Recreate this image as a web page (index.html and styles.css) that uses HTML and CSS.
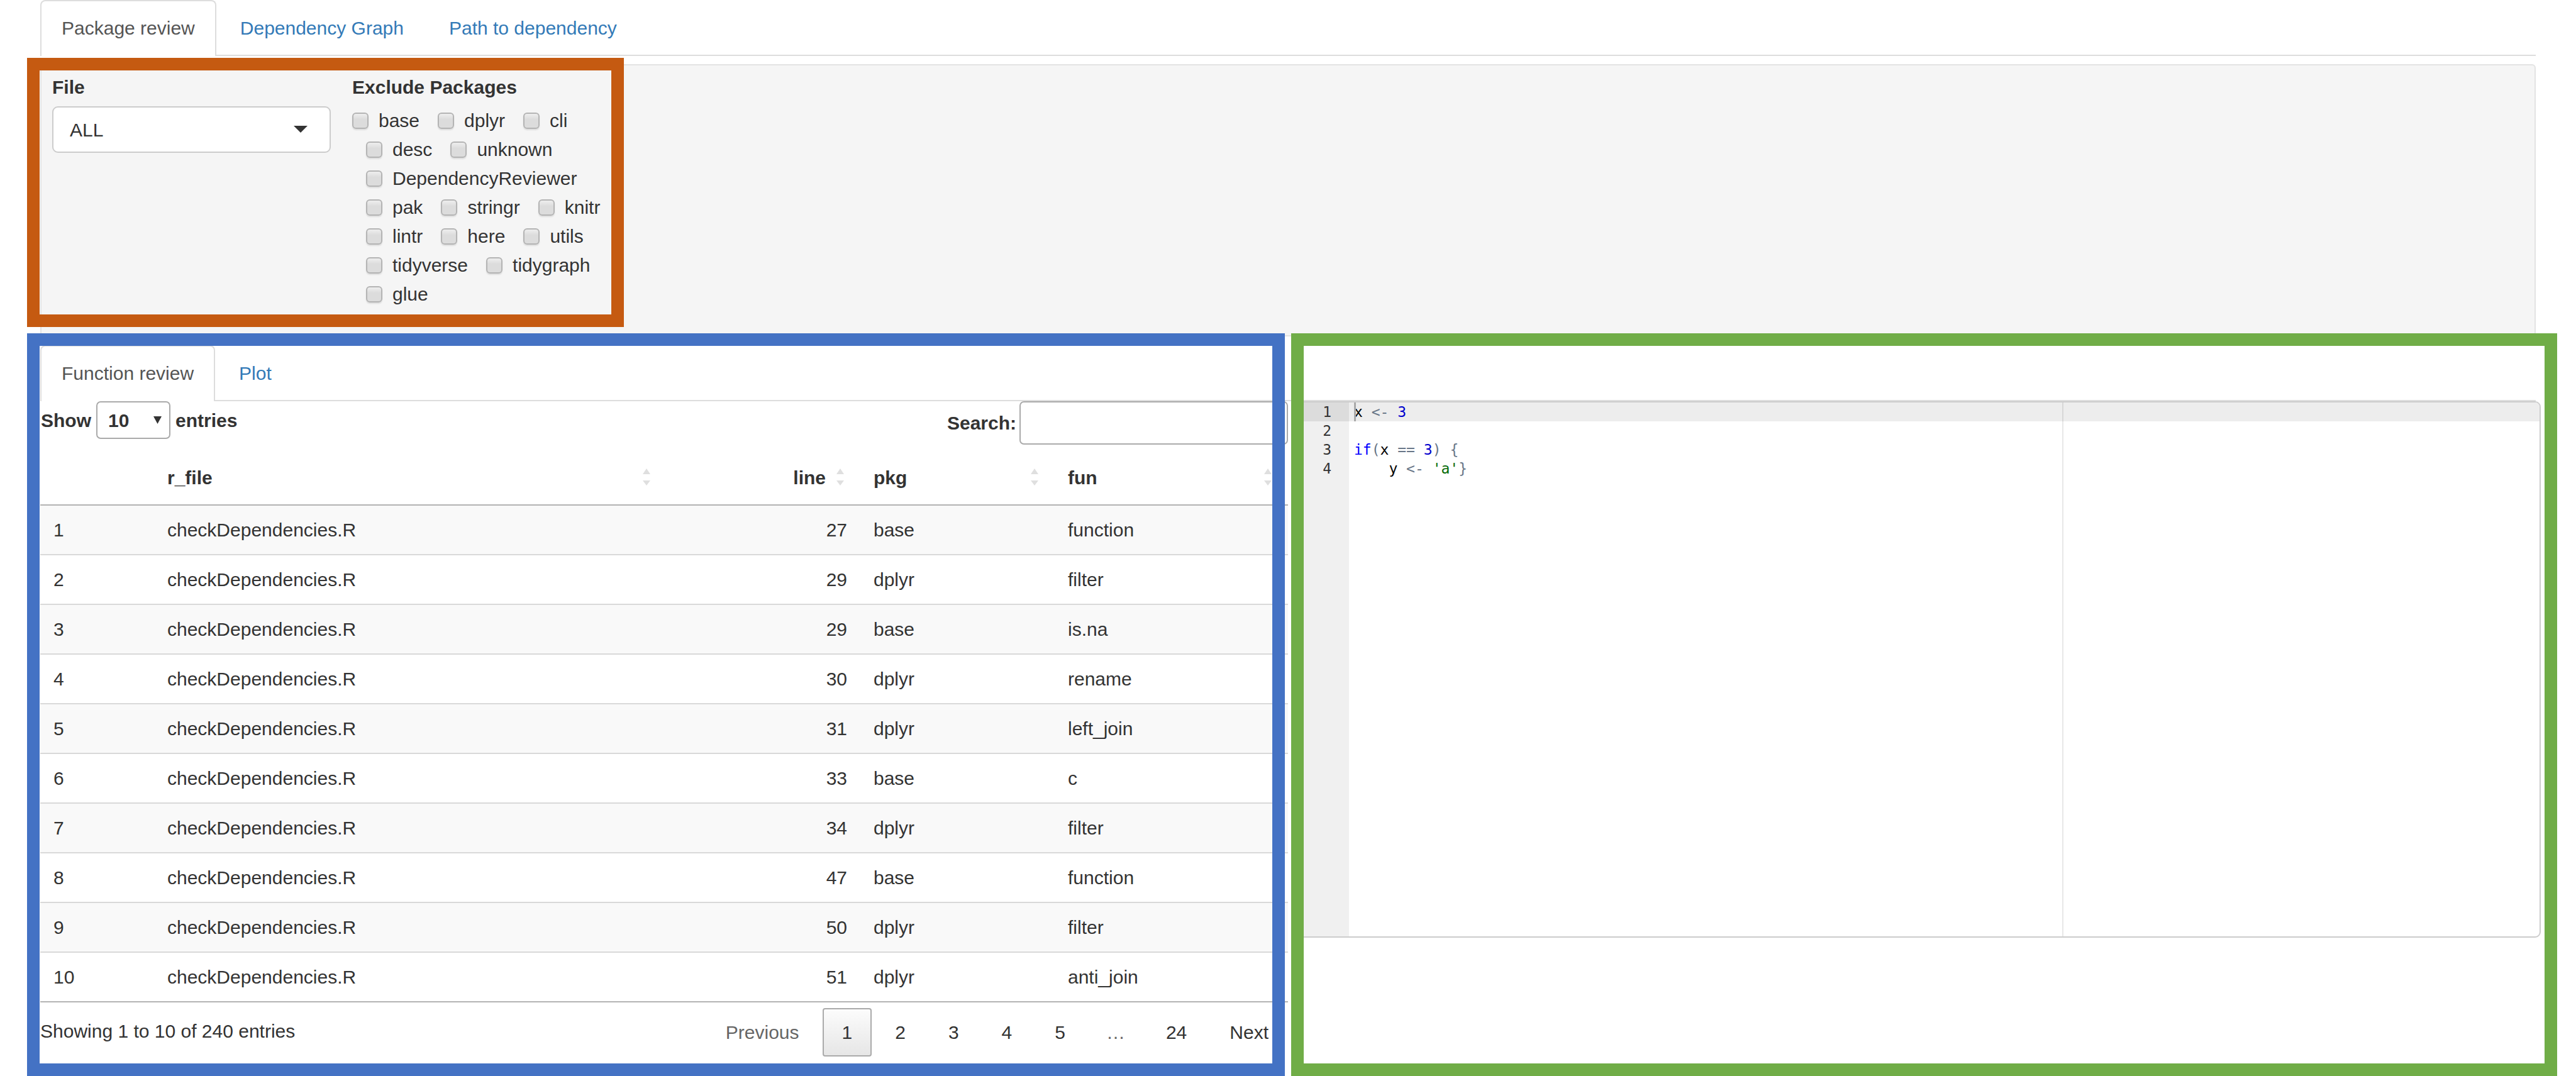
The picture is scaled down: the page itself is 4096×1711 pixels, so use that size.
FILE: index.html
```html
<!DOCTYPE html>
<html lang="en">
<head>
  <meta charset="utf-8">
  <title>Package review</title>
  <link rel="stylesheet" href="styles.css">
</head>
<body>
  <nav class="tabs" aria-label="Main">
    <a class="tab tab-active" href="#review">Package review</a>
    <a class="tab" href="#graph">Dependency Graph</a>
    <a class="tab" href="#path">Path to dependency</a>
  </nav>

  <section class="well">
    <form class="filters">
      <div class="file-field">
        <label class="field-label" for="file">File</label>
        <span class="select-wrap select-wrap-file">
          <select class="file-select" id="file"><option>ALL</option></select>
        </span>
      </div>
      <fieldset class="packages">
        <legend class="field-label">Exclude Packages</legend>
        <div class="package-list">
          <label class="package"><input class="check" type="checkbox">base</label>
          <label class="package"><input class="check" type="checkbox">dplyr</label>
          <label class="package"><input class="check" type="checkbox">cli</label>
          <label class="package"><input class="check" type="checkbox">desc</label>
          <label class="package"><input class="check" type="checkbox">unknown</label>
          <label class="package"><input class="check" type="checkbox">DependencyReviewer</label>
          <label class="package"><input class="check" type="checkbox">pak</label>
          <label class="package"><input class="check" type="checkbox">stringr</label>
          <label class="package"><input class="check" type="checkbox">knitr</label>
          <label class="package"><input class="check" type="checkbox">lintr</label>
          <label class="package"><input class="check" type="checkbox">here</label>
          <label class="package"><input class="check" type="checkbox">utils</label>
          <label class="package"><input class="check" type="checkbox">tidyverse</label>
          <label class="package"><input class="check" type="checkbox">tidygraph</label>
          <label class="package"><input class="check" type="checkbox">glue</label>
        </div>
      </fieldset>
    </form>
  </section>

  <nav class="tabs" aria-label="Review">
    <a class="tab tab-active" href="#functions">Function review</a>
    <a class="tab" href="#plot">Plot</a>
  </nav>

  <main class="panels">
    <section class="table-panel">
      <div class="table-controls">
        <div class="length">
          <label for="length">Show</label>
          <span class="select-wrap select-wrap-length">
            <select class="length-select" id="length"><option>10</option></select>
          </span>
          <span>entries</span>
        </div>
        <div class="search">
          <label for="search">Search:</label>
          <input class="search-input" id="search" type="search">
        </div>
      </div>

      <table class="data">
        <colgroup>
          <col class="col-index"><col><col class="col-line"><col class="col-pkg"><col class="col-fun">
        </colgroup>
        <thead>
          <tr>
            <th></th>
            <th class="sortable">r_file</th>
            <th class="sortable num">line</th>
            <th class="sortable">pkg</th>
            <th class="sortable">fun</th>
          </tr>
        </thead>
        <tbody>
          <tr><td>1</td><td>checkDependencies.R</td><td class="num">27</td><td>base</td><td>function</td></tr>
          <tr><td>2</td><td>checkDependencies.R</td><td class="num">29</td><td>dplyr</td><td>filter</td></tr>
          <tr><td>3</td><td>checkDependencies.R</td><td class="num">29</td><td>base</td><td>is.na</td></tr>
          <tr><td>4</td><td>checkDependencies.R</td><td class="num">30</td><td>dplyr</td><td>rename</td></tr>
          <tr><td>5</td><td>checkDependencies.R</td><td class="num">31</td><td>dplyr</td><td>left_join</td></tr>
          <tr><td>6</td><td>checkDependencies.R</td><td class="num">33</td><td>base</td><td>c</td></tr>
          <tr><td>7</td><td>checkDependencies.R</td><td class="num">34</td><td>dplyr</td><td>filter</td></tr>
          <tr><td>8</td><td>checkDependencies.R</td><td class="num">47</td><td>base</td><td>function</td></tr>
          <tr><td>9</td><td>checkDependencies.R</td><td class="num">50</td><td>dplyr</td><td>filter</td></tr>
          <tr><td>10</td><td>checkDependencies.R</td><td class="num">51</td><td>dplyr</td><td>anti_join</td></tr>
        </tbody>
      </table>

      <div class="table-footer">
        <div class="info">Showing 1 to 10 of 240 entries</div>
        <div class="pager">
          <button class="page" type="button" disabled>Previous</button>
          <button class="page page-current" type="button">1</button>
          <button class="page" type="button">2</button>
          <button class="page" type="button">3</button>
          <button class="page" type="button">4</button>
          <button class="page" type="button">5</button>
          <span class="ellipsis">…</span>
          <button class="page" type="button">24</button>
          <button class="page" type="button">Next</button>
        </div>
      </div>
    </section>

    <section class="editor-panel">
      <div class="editor">
        <div class="gutter">
          <div class="line-no line-no-active">1</div>
          <div class="line-no">2</div>
          <div class="line-no">3</div>
          <div class="line-no">4</div>
        </div>
        <div class="code">
          <div class="code-line code-line-active">x <span class="op">&lt;-</span> <span class="number">3</span></div>
          <div class="code-line"></div>
          <div class="code-line"><span class="keyword">if</span><span class="op">(</span>x <span class="op">==</span> <span class="number">3</span><span class="op">)</span> <span class="op">{</span></div>
          <div class="code-line">    y <span class="op">&lt;-</span> <span class="string">'a'</span><span class="op">}</span></div>
        </div>
      </div>
    </section>
  </main>
</body>
</html>
```
FILE: styles.css
```css
* {
  box-sizing: border-box;
}

body {
  margin: 0;
  padding: 0 64px;
  background: #fff;
  color: #333;
  font: 30px/43px "Liberation Sans", Arial, sans-serif;
}

input,
select,
button {
  margin: 0;
  color: inherit;
  font: inherit;
}

/* Tabs */

.tabs {
  display: flex;
  gap: 4px;
  border-bottom: 2px solid #ddd;
}

.tab {
  margin-bottom: -2px;
  padding: 21px 32px 23px;
  border: 2px solid transparent;
  border-bottom: 0;
  border-radius: 8px 8px 0 0;
  color: #337ab7;
  text-decoration: none;
}

.tab-active {
  border-color: #ddd;
  background: #fff;
  color: #555;
}

/* Filters */

.well {
  display: flex;
  margin: 13px 0 14px;
  padding: 13px 17px 42px;
  border: 2px solid #e3e3e3;
  border-radius: 6px;
  background: #f5f5f5;
}

.filters {
  position: relative;
  display: flex;
  gap: 34px;
}

.file-field {
  width: 443px;
}

.field-label {
  display: block;
  margin-bottom: 9px;
  padding: 0;
  font-weight: bold;
}

.select-wrap {
  position: relative;
  display: block;
}

.select-wrap::after {
  position: absolute;
  background: #333;
  clip-path: polygon(0 0, 100% 0, 50% 100%);
  content: "";
  pointer-events: none;
}

.select-wrap-file::after {
  top: 31px;
  right: 37px;
  width: 22px;
  height: 11px;
}

.file-select {
  display: block;
  width: 100%;
  height: 74px;
  padding: 0 26px;
  appearance: none;
  border: 2px solid #ccc;
  border-radius: 9px;
  background: #fff;
}

.packages {
  width: 410px;
  margin: 0;
  padding: 0;
  border: 0;
}

.package-list {
  display: flex;
  flex-wrap: wrap;
  column-gap: 29px;
  padding-left: 22px;
}

.package {
  display: flex;
  align-items: center;
  gap: 16px;
  line-height: 46px;
}

.package:first-child {
  margin-left: -22px;
}

.check {
  width: 26px;
  height: 26px;
  appearance: none;
  border: 2px solid #b4b4b4;
  border-radius: 6px;
  background: linear-gradient(#eee, #dcdcdc 40%);
  box-shadow: 0 2px 2px #ddd;
}

/* Table */

.panels {
  display: grid;
  grid-template-columns: 1fr 1fr;
  gap: 8px;
  margin-right: -8px;
}

.table-panel {
  position: relative;
  padding-bottom: 31px;
}

.table-controls {
  display: flex;
  align-items: flex-start;
  justify-content: space-between;
  margin-bottom: 10px;
  font-weight: bold;
}

.length,
.search {
  display: flex;
  align-items: center;
}

.length {
  gap: 8px;
  padding-left: 1px;
}

.search {
  gap: 5px;
}

.length-select {
  display: block;
  width: 118px;
  height: 60px;
  padding: 0 17px;
  appearance: none;
  border: 2px solid #aaa;
  border-radius: 7px;
  background: #fff;
}

.select-wrap-length::after {
  top: 24px;
  right: 14px;
  width: 13px;
  height: 12px;
}

.search-input {
  width: 427px;
  height: 69px;
  padding: 0 12px;
  appearance: none;
  border: 2px solid #aaa;
  border-radius: 7px;
  background: #fff;
}

.data {
  width: 100%;
  table-layout: fixed;
  border-bottom: 2px solid #b3b3b3;
  border-collapse: separate;
  border-spacing: 0;
}

.col-index {
  width: 181px;
}

.col-line {
  width: 308px;
}

.col-pkg {
  width: 309px;
}

.col-fun {
  width: 371px;
}

.data th {
  position: relative;
  padding: 21px 55px 21px 21px;
  border-bottom: 2px solid #b3b3b3;
  text-align: left;
}

.data td {
  padding: 17px 21px;
  border-top: 2px solid #d9d9d9;
}

.data tbody tr:first-child td {
  border-top: 0;
}

.data tbody tr:nth-child(odd) {
  background: #f9f9f9;
}

.data .num {
  text-align: right;
}

.sortable::before,
.sortable::after {
  position: absolute;
  right: 26px;
  width: 12px;
  background: #dfdfdf;
  content: "";
}

.sortable::before {
  top: 28px;
  height: 9px;
  clip-path: polygon(50% 0, 100% 100%, 0 100%);
}

.sortable::after {
  top: 47px;
  height: 8px;
  clip-path: polygon(0 0, 100% 0, 50% 100%);
}

.table-footer {
  display: flex;
  justify-content: space-between;
  margin-top: 9px;
}

.info {
  padding-top: 15px;
}

.pager {
  display: flex;
  gap: 6px;
}

.page {
  padding: 15px 29px;
  border: 2px solid transparent;
  border-radius: 4px;
  background: none;
}

.page:disabled,
.ellipsis {
  color: #666;
}

.page-current {
  border-color: #aaa;
  background: linear-gradient(#fcfcfc, #e6e6e6);
}

.ellipsis {
  padding: 17px 28px;
}

/* Editor */

.editor-panel {
  position: relative;
}

.editor {
  display: flex;
  height: 853px;
  overflow: hidden;
  border: 2px solid #ccc;
  border-radius: 9px;
  color: #000;
  font: 23px/30px "DejaVu Sans Mono", monospace;
}

.gutter {
  width: 87px;
  background: #f0f0f0;
  color: #333;
  text-align: right;
}

.line-no {
  padding-right: 28px;
}

.line-no-active {
  background: #dcdcdc;
}

.code {
  position: relative;
  flex: 1;
}

/* Print margin at column 80 */
.code::after {
  position: absolute;
  top: 0;
  bottom: 0;
  left: 1134px;
  width: 2px;
  background: rgba(0, 0, 0, 0.09);
  content: "";
}

.code-line {
  height: 30px;
  padding-left: 8px;
  white-space: pre;
}

.code-line-active {
  position: relative;
  background: #ededed;
}

/* Text cursor */
.code-line-active::before {
  position: absolute;
  top: 0;
  bottom: 0;
  left: 8px;
  width: 3px;
  background: #aaa;
  content: "";
}

.op {
  color: #687687;
}

.number {
  color: #0000cd;
}

.keyword {
  color: #00f;
}

.string {
  color: #036a07;
}

/* Coloured frames laid over the three areas */

.filters::after,
.table-panel::after,
.editor-panel::after {
  position: absolute;
  z-index: 2;
  border: 20px solid;
  content: "";
  pointer-events: none;
}

.filters::after {
  inset: -25px -22px -29px -40px;
  border-color: #c55a11;
}

.table-panel::after {
  inset: -108px 5px 0 -21px;
  border-color: #4472c4;
}

.editor-panel::after {
  inset: -108px -26px 0 -3px;
  border-color: #70ad47;
}
```
